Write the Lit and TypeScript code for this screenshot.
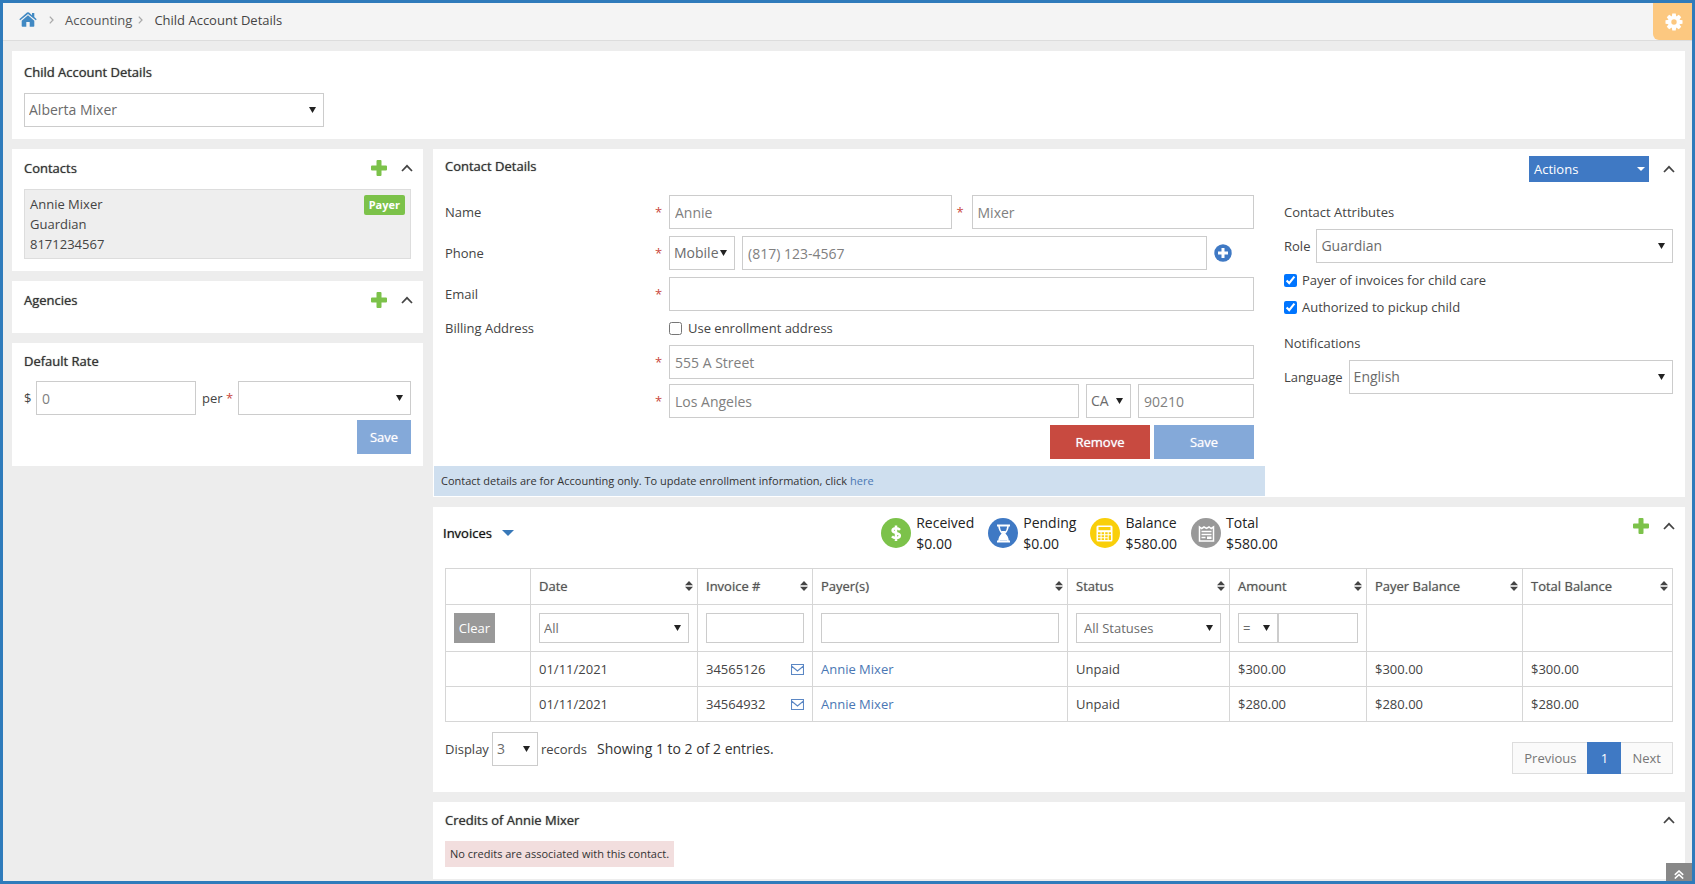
import { LitElement, html, css, svg, nothing } from "lit";
import { customElement, property } from "lit/decorators.js";

const shared = css`
  *, *::before, *::after { box-sizing: border-box; }
  button, input, select { font: inherit; margin: 0; border-radius: 0; }
  button { border: 0; padding: 0; background: none; cursor: pointer; color: inherit; }
  a { color: #4a77b4; text-decoration: none; }
  svg { display: block; flex: none; }
`;

const chevronUp = html`<svg width="12" height="8" viewBox="0 0 12 8"><path d="M1 7 6 1.8 11 7" fill="none" stroke="#444" stroke-width="1.7"/></svg>`;
const plus = html`<svg width="16" height="16" viewBox="0 0 16 16"><path d="M5.5 1q0-1 1-1h3q1 0 1 1v4.5H15q1 0 1 1v3q0 1-1 1h-4.500V15q0 1-1 1h-3q-1 0-1-1v-4.500H1q-1 0-1-1v-3q0-1 1-1h4.500z" fill="#7cc24a"/></svg>`;
const crumb = html`<svg width="5" height="8" viewBox="0 0 5 8"><path d="M.8.6 4 4 .8 7.400" fill="none" stroke="#aaa" stroke-width="1.300"/></svg>`;
const sortGlyph = html`<svg width="8" height="10" viewBox="0 0 8 10"><path d="M0 4.300 4 0l4 4.300zM0 5.700h8L4 10z" fill="#444"/></svg>`;
const envelope = html`<svg width="13" height="11" viewBox="0 0 13 11"><path d="M.5.500h12v10H.500zM.500 2 6.500 7 12.500 2" fill="none" stroke="#5b87c4" stroke-width="1.100"/></svg>`;

/** Drop-down with the flat frame and small solid arrow used across the page. */
@customElement("flat-select")
export class FlatSelect extends LitElement {
  @property() label = "";
  @property({ type: Array }) options: string[] = [];
  @property() size: "" | "small" = "";

  static styles = [shared, css`
    :host { display: block; min-width: 0; }
    .box { display: grid; align-items: center; }
    .box > * { grid-area: 1 / 1; }
    .field {
      appearance: none; width: 100%; height: 34px; padding: 0 4px; border: 1px solid #ccc;
      background: #fff; color: #6b6b6b; font-size: 14px;
    }
    .field.small { height: 30px; font-size: 13px; padding-left: var(--text-inset, 4px); }
    .arrow { justify-self: end; margin-right: 8px; pointer-events: none; }
  `];

  render() {
    return html`<div class="box">
      <select class="field ${this.size}" aria-label=${this.label}>
        ${this.options.map((o) => html`<option>${o}</option>`)}
      </select>
      <svg class="arrow" width="7" height="6" viewBox="0 0 7 6"><path d="M0 0h7L3.500 6z" fill="#222"/></svg>
    </div>`;
  }
}

interface Stat { name: string; amount: string; color: string; glyph: unknown; }

const stats: Stat[] = [
  {
    name: "Received", amount: "$0.00", color: "#7cc24a",
    glyph: svg`<path d="M19 11.800C18 10.700 16.600 10.200 15 10.200c-2 0-3.400.9-3.400 2.400 0 3.300 7.200 1.500 7.200 5 0 1.600-1.600 2.500-3.700 2.500-1.700 0-3.200-.6-4.100-1.700M15 7.500v15.500" fill="none" stroke="#fff" stroke-width="2.500"/>`,
  },
  {
    name: "Pending", amount: "$0.00", color: "#3f79c4",
    glyph: svg`<path d="M9 7.500h13M9 23.500h13" stroke="#fff" stroke-width="2"/><path d="M11 8c0 4 1.500 5.500 3.500 7.500C12.500 17.500 11 19 11 23M20 8c0 4-1.500 5.500-3.500 7.500C18.500 17.500 20 19 20 23" fill="none" stroke="#fff" stroke-width="1.500"/><path d="M13.300 13h4.400l-1.400 2.500c2 1.500 3 3 3.200 7h-8c.2-4 1.200-5.500 3.200-7z" fill="#fff"/>`,
  },
  {
    name: "Balance", amount: "$580.00", color: "#f9cf0a",
    glyph: svg`<rect x="6.500" y="7.500" width="16" height="16" rx="1.500" fill="#fff"/><rect x="8.500" y="9" width="12" height="3.200" fill="#f9cf0a"/><path d="M8 14.300h2.500v2H8zm3.600 0h2.500v2h-2.500zm3.600 0h2.500v2h-2.500zm3.500 0h2.300v2h-2.300zM8 17.300h2.500v2H8zm3.600 0h2.500v2h-2.500zm3.600 0h2.500v2h-2.500zm3.500 0h2.300v4.800h-2.300zM8 20.300h2.500v1.800H8zm3.600 0h2.500v1.800h-2.500zm3.600 0h2.500v1.800h-2.500z" fill="#f9cf0a"/>`,
  },
  {
    name: "Total", amount: "$580.00", color: "#999",
    glyph: svg`<path d="M8.500 9v14h14V9l-2.300 1.500L18 9l-2.500 1.500L13 9l-2.300 1.500z" fill="none" stroke="#fff" stroke-width="1.500"/><path d="M10.500 13.500h10M10.500 16.500h10M10.500 19.500h4" stroke="#fff" stroke-width="1.500"/><path d="M16 18.500h4.500v2.500H16z" fill="#fff"/>`,
  },
];

const columns = ["Date", "Invoice #", "Payer(s)", "Status", "Amount", "Payer Balance", "Total Balance"];
const invoices = [
  { date: "01/11/2021", no: "34565126", payer: "Annie Mixer", status: "Unpaid", amount: "$300.00" },
  { date: "01/11/2021", no: "34564932", payer: "Annie Mixer", status: "Unpaid", amount: "$280.00" },
];

@customElement("app-root")
export class AppRoot extends LitElement {
  static styles = [shared, css`
    :host {
      display: flex; flex-direction: column; box-sizing: border-box; min-height: 100vh;
      border: 3px solid #2f7bbb; background: #ededed; color: #444;
      font: 13px/20px "Open Sans", "Noto Sans", sans-serif;
    }
    h1, h2, p, dl, dd, dt, ol { margin: 0; padding: 0; font-weight: 400; font-size: inherit; }

    .topbar { display: flex; justify-content: space-between; height: 38px; background: #f4f4f4; border-bottom: 1px solid #ddd; }
    .crumbs { display: flex; align-items: center; list-style: none; padding: 0 0 4px 16px; }
    .crumbs a { color: #555; }
    .crumbs svg { margin-right: 11px; }
    .crumbs .home svg { margin: 0; }
    .crumbs li { display: flex; align-items: center; }
    .crumbs .home { margin-right: 12px; }
    .crumbs .section { margin-right: 6px; }
    .gear { display: grid; place-items: center; width: 39px; height: 37px; padding-left: 2px; background: #fcc880; border-bottom-left-radius: 6px; }

    .page { display: flex; flex-direction: column; gap: 10px; padding: 10px 7px 2px 9px; flex: 1; }
    .split { display: grid; grid-template-columns: 411px minmax(0, 1fr); gap: 10px; flex: 1; }
    .stack { display: flex; flex-direction: column; gap: 10px; min-width: 0; }
    .panel { background: #fff; padding: 8px 12px 12px; }
    .panel.account { padding-top: 11px; }
    .panel.contacts { padding-top: 9px; }
    .panel.agencies { padding-top: 9px; padding-bottom: 23px; }
    .panel.details { padding: 7px 0 1px; }
    .panel.invoices { padding-top: 5px; }
    .panel.credits { flex: 1; }
    .head { display: flex; justify-content: space-between; align-items: flex-start; margin-bottom: 11px; }
    .agencies .head { margin: 0; }
    .details .head { padding: 0 12px; margin-bottom: 13px; }
    .title { color: #333; text-shadow: 0 0 1px #666; }
    .tools { display: flex; align-items: center; gap: 14px; min-height: 20px; margin-right: -2px; }

    .account-picker { display: block; width: 300px; margin-top: 11px; }
    .text {
      width: 100%; min-width: 0; height: 34px; padding: 0 5px; border: 1px solid #ccc;
      background: #fff; color: #808080; font-size: 14px;
    }
    .text.small { height: 30px; }
    .req { color: #c9483c; }
    .btn { height: 34px; color: #fff; background: #84a9d9; text-shadow: 0 0 1px #dde; }
    .btn.wide { width: 100px; }
    .btn.danger { background: #c84a40; }

    .contact { display: flex; justify-content: space-between; align-items: flex-start; padding: 4px 5px; background: #eee; border: 1px solid #ddd; }
    .badge { margin-top: 1px; padding: 0 5px; border-radius: 2px; background: #7cc24a; color: #fff; font-size: 11px; font-weight: 700; }

    .rate { display: grid; grid-template-columns: 12px 160px 42px minmax(0, 1fr); align-items: center; margin: 10px 0 5px; }
    .rate .per { padding-left: 6px; white-space: nowrap; }
    .right { display: flex; justify-content: flex-end; gap: 4px; }
    .rate-save { width: 54px; }

    .details-body { display: grid; grid-template-columns: minmax(0, 1fr) 420px; }
    .form { display: flex; flex-direction: column; gap: 7px; }
    .line { display: grid; grid-template-columns: 210px 14px minmax(0, 1fr); align-items: center; padding: 0 11px 0 12px; }
    .line + .tight { margin-top: -2px; }
    .fields { display: flex; align-items: center; gap: 7px; }
    .fields > .grow { flex: 1; }
    .names { display: grid; grid-template-columns: 1fr 20px 1fr; align-items: center; }
    .names .req { padding-left: 5px; }
    .kind { width: 66px; }
    .state { width: 45px; }
    .zip { width: 116px; }
    .add-phone { width: 40px; }
    .check { display: flex; align-items: center; gap: 6px; }
    .check input { width: 13px; height: 13px; }
    .form .right { padding-right: 11px; }
    .note { margin-left: 1px; padding: 5px 7px; background: #cfdfef; color: #333; font-size: 11px; }

    .attrs { display: flex; flex-direction: column; gap: 7px; padding: 7px 12px 0 19px; }
    .attrs .notify { margin-top: 9px; }
    .attrs .pair { display: flex; align-items: center; gap: 6px; }
    .attrs .check { gap: 5px; }
    .pair flat-select { flex: 1; }
    .actions { display: flex; align-items: center; justify-content: space-between; width: 120px; height: 26px; padding: 0 4px 0 5px; background: #3f79c4; color: #fff; }

    .invoice-head { display: grid; grid-template-columns: 1fr auto 1fr; margin: 0 0 14px -2px; }
    .invoice-title { display: flex; align-items: center; gap: 10px; color: #111; }
    .invoice-head .tools { justify-self: end; align-self: start; margin-top: 4px; }
    .stats { display: flex; gap: 14px; margin-left: 43px; color: #222; font-size: 14px; }
    .stat { display: flex; align-items: center; gap: 5px; line-height: 21px; }

    table { width: 100%; border-collapse: collapse; table-layout: fixed; }
    th, td { border: 1px solid #d6d6d6; padding: 0 8px; text-align: left; font-weight: 400; height: 35px; }
    th { color: #555; height: 36px; padding-right: 4px; padding-bottom: 2px; text-shadow: 0 0 1px #999; }
    .filters td { height: 47px; }
    .c-clear { width: 85px; }
    .c-date { width: 167px; }
    .c-no { width: 115px; }
    .c-status { width: 162px; --text-inset: 7px; }
    .c-amount { width: 137px; }
    .c-pbal { width: 156px; }
    .c-tbal { width: 150px; }
    .by-status { --text-inset: 7px; }
    .between { display: flex; align-items: center; justify-content: space-between; }
    .amount-filter { display: grid; grid-template-columns: 40px minmax(0, 1fr); }
    .clear { width: 41px; height: 30px; background: #999; color: #fff; }

    .foot { display: flex; justify-content: space-between; padding-top: 10px; padding-bottom: 6px; }
    .records { display: flex; align-items: center; gap: 3px; height: 34px; }
    .records .len { width: 46px; }
    .showing { margin-left: 7px; color: #333; font-size: 14px; }
    .pager { display: flex; margin-top: 10px; border: 1px solid #ddd; height: 32px; }
    .pager button { padding: 0 11px; background: #fafafa; color: #777; }
    .pager .now { width: 34px; margin: -1px 0; background: #3f79c4; color: #fff; }

    .none { display: inline-block; padding: 3px 5px; background: #f2dede; color: #333; font-size: 11px; }
    .to-top { position: fixed; right: 3px; bottom: 3px; display: grid; place-items: center; width: 26px; height: 18px; padding-top: 5px; background: #888; }
  `];

  render() {
    return html`
      <header class="topbar">
        <ol class="crumbs">
          <li class="home"><a href="#" aria-label="Home">
            <svg width="18" height="15" viewBox="0 0 18 15"><path d="M9 3.300 2.700 8.700V14q0 .8.8.8h3.800V10h3.400v4.800h3.800q.8 0 .8-.8V8.700zM17.700 7.200 15.300 5V1h-2.300v2.200L10 .6Q9 0 8 .6L.3 7.200l.9 1L9 1.900l7.800 6.300z" fill="#4189c3"/></svg></a></li>
          <li class="section">${crumb}<a href="#">Accounting</a></li>
          <li>${crumb}<span>Child Account Details</span></li>
        </ol>
        <button class="gear" aria-label="Settings">
          <svg width="18" height="18" viewBox="-9 -9 18 18"><g fill="#fff">
            ${[0, 45, 90, 135, 180, 225, 270, 315].map((a) => svg`<path d="M-2.300-5-1.700-8.500h3.400L2.300-5z" transform="rotate(${a})"/>`)}
            </g><circle r="4.400" fill="none" stroke="#fff" stroke-width="3.400"/></svg>
        </button>
      </header>

      <main class="page">
        <section class="panel account">
          <h1 class="title">Child Account Details</h1>
          <flat-select class="account-picker" label="Child" .options=${["Alberta Mixer"]}></flat-select>
        </section>

        <div class="split">
          <div class="stack">${this.side()}</div>
          <div class="stack">${this.details()}${this.invoices()}${this.credits()}</div>
        </div>
      </main>
      <button class="to-top" aria-label="Back to top">
        <svg width="10" height="9" viewBox="0 0 10 9"><path d="M.8 4.800 5 1l4.200 3.800M.8 8.500 5 4.700l4.200 3.800" fill="none" stroke="#fff" stroke-width="1.600"/></svg>
      </button>`;
  }

  private tools(add: string, name: string) {
    return html`<div class="tools">
      ${add ? html`<button aria-label=${add}>${plus}</button>` : nothing}
      <button aria-label="Collapse ${name}">${chevronUp}</button>
    </div>`;
  }

  private side() {
    return html`
      <section class="panel contacts">
        <div class="head"><h2 class="title">Contacts</h2>${this.tools("Add contact", "contacts")}</div>
        <div class="contact">
          <div><p>Annie Mixer</p><p>Guardian</p><p>8171234567</p></div>
          <span class="badge">Payer</span>
        </div>
      </section>
      <section class="panel agencies">
        <div class="head"><h2 class="title">Agencies</h2>${this.tools("Add agency", "agencies")}</div>
      </section>
      <section class="panel">
        <h2 class="title">Default Rate</h2>
        <div class="rate">
          <label for="rate">$</label>
          <input id="rate" class="text" value="0">
          <span class="per">per <span class="req">*</span></span>
          <flat-select label="Rate period" .options=${[""]}></flat-select>
        </div>
        <div class="right"><button class="btn rate-save">Save</button></div>
      </section>`;
  }

  private details() {
    const star = html`<span class="req">*</span>`;
    return html`<section class="panel details">
      <div class="head">
        <h2 class="title">Contact Details</h2>
        <div class="tools">
          <button class="actions">Actions
            <svg width="8" height="4" viewBox="0 0 8 4"><path d="M0 0h8L4 4z" fill="#fff"/></svg>
          </button>
          <button aria-label="Collapse contact details">${chevronUp}</button>
        </div>
      </div>
      <div class="details-body">
        <div class="form">
          <div class="line"><label for="first">Name</label>${star}
            <div class="names">
              <input id="first" class="text" value="Annie">${star}
              <input class="text" aria-label="Last name" value="Mixer">
            </div>
          </div>
          <div class="line"><label for="phone">Phone</label>${star}
            <div class="fields">
              <flat-select class="kind" label="Phone type" .options=${["Mobile"]}></flat-select>
              <input id="phone" class="text grow" value="(817) 123-4567">
              <button class="add-phone" aria-label="Add phone">
                <svg width="18" height="18" viewBox="0 0 18 18"><circle cx="9" cy="9" r="8.700" fill="#3f79c4"/><path d="M9 4v10M4 9h10" stroke="#fff" stroke-width="3"/></svg>
              </button>
            </div>
          </div>
          <div class="line"><label for="email">Email</label>${star}
            <input id="email" class="text" type="email">
          </div>
          <div class="line"><span>Billing Address</span><span></span>
            <label class="check"><input type="checkbox">Use enrollment address</label>
          </div>
          <div class="line"><span></span>${star}
            <input class="text" aria-label="Street" value="555 A Street">
          </div>
          <div class="line tight"><span></span>${star}
            <div class="fields">
              <input class="text grow" aria-label="City" value="Los Angeles">
              <flat-select class="state" label="State" .options=${["CA"]}></flat-select>
              <input class="text zip" aria-label="Zip code" value="90210">
            </div>
          </div>
          <div class="right">
            <button class="btn wide danger">Remove</button>
            <button class="btn wide">Save</button>
          </div>
          <p class="note">Contact details are for Accounting only. To update enrollment information, click <a href="#">here</a></p>
        </div>
        <div class="attrs">
          <p>Contact Attributes</p>
          <div class="pair"><span>Role</span><flat-select label="Role" .options=${["Guardian"]}></flat-select></div>
          <label class="check"><input type="checkbox" checked>Payer of invoices for child care</label>
          <label class="check"><input type="checkbox" checked>Authorized to pickup child</label>
          <p class="notify">Notifications</p>
          <div class="pair"><span>Language</span><flat-select label="Language" .options=${["English"]}></flat-select></div>
        </div>
      </div>
    </section>`;
  }

  private invoices() {
    return html`<section class="panel invoices">
      <div class="invoice-head">
        <h2 class="title invoice-title">Invoices
          <svg width="12" height="6" viewBox="0 0 12 6"><path d="M0 0h12L6 6z" fill="#3878b8"/></svg>
        </h2>
        <dl class="stats">
          ${stats.map((s) => html`<div class="stat">
            <svg width="30" height="30" viewBox="0 0 30 30"><circle cx="15" cy="15" r="15" fill=${s.color}/>${s.glyph}</svg>
            <div><dt>${s.name}</dt><dd>${s.amount}</dd></div>
          </div>`)}
        </dl>
        ${this.tools("Add invoice", "invoices")}
      </div>
      <table>
        <colgroup>
          <col class="c-clear"><col class="c-date"><col class="c-no"><col><col class="c-status">
          <col class="c-amount"><col class="c-pbal"><col class="c-tbal">
        </colgroup>
        <thead>
          <tr><th></th>${columns.map((c) => html`<th><div class="between">${c}<button aria-label="Sort by ${c}">${sortGlyph}</button></div></th>`)}</tr>
        </thead>
        <tbody>
          <tr class="filters">
            <td><button class="clear">Clear</button></td>
            <td><flat-select size="small" label="Date filter" .options=${["All"]}></flat-select></td>
            <td><input class="text small" aria-label="Invoice number filter"></td>
            <td><input class="text small" aria-label="Payer filter"></td>
            <td><flat-select class="by-status" size="small" label="Status filter" .options=${["All Statuses"]}></flat-select></td>
            <td><div class="amount-filter">
              <flat-select size="small" label="Amount comparison" .options=${["="]}></flat-select>
              <input class="text small" aria-label="Amount filter">
            </div></td>
            <td></td><td></td>
          </tr>
          ${invoices.map((r) => html`<tr>
            <td></td><td>${r.date}</td>
            <td><div class="between">${r.no}<button aria-label="Email invoice">${envelope}</button></div></td>
            <td><a href="#">${r.payer}</a></td>
            <td>${r.status}</td><td>${r.amount}</td><td>${r.amount}</td><td>${r.amount}</td>
          </tr>`)}
        </tbody>
      </table>
      <div class="foot">
        <div class="records">
          <span>Display</span>
          <flat-select class="len" label="Records per page" .options=${["3"]}></flat-select>
          <span>records</span>
          <span class="showing">Showing 1 to 2 of 2 entries.</span>
        </div>
        <nav class="pager" aria-label="Invoice pages">
          <button>Previous</button><button class="now">1</button><button>Next</button>
        </nav>
      </div>
    </section>`;
  }

  private credits() {
    return html`<section class="panel credits">
      <div class="head"><h2 class="title">Credits of Annie Mixer</h2>${this.tools("", "credits")}</div>
      <p class="none">No credits are associated with this contact.</p>
    </section>`;
  }
}
